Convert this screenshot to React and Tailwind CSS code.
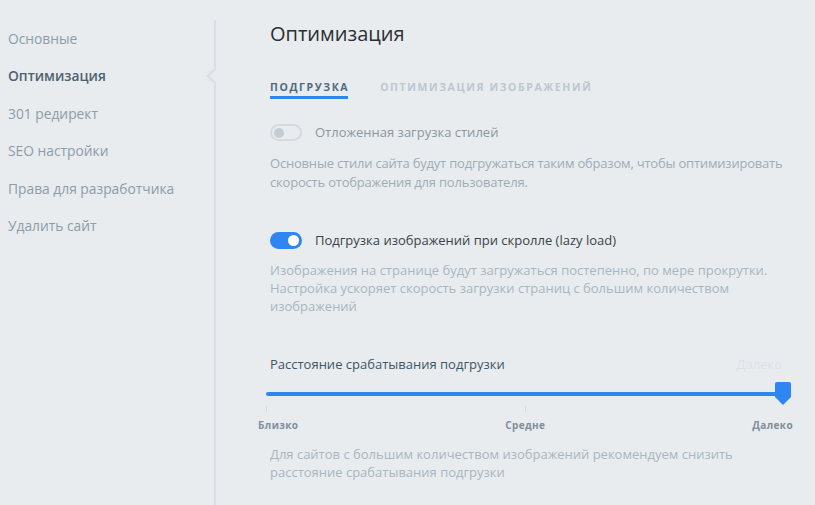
import React from "react";

const font = { fontFamily: '"Open Sans", "Noto Sans", sans-serif' };

function Sidebar() {
  const items = ["Основные", "Оптимизация", "301 редирект", "SEO настройки", "Права для разработчика", "Удалить сайт"];
  return (
    <div className="relative w-[216px] shrink-0 pt-[20px]">
      <div className="absolute right-0 top-[20px] bottom-0 w-[2px] bg-[#d9dfe4]" />
      <div className="absolute right-[-5px] top-[70px] h-[12px] w-[12px] rotate-45 border-b-2 border-l-2 border-[#d9dfe4] bg-[#e8ecef]" />
      <div className="flex flex-col pl-[8px] pt-[9px]">
        {items.map((t, i) => (
          <div
            key={t}
            className={`h-[37.4px] text-[13.8px] leading-[20px] ${i === 1 ? "text-[#4f6170] font-semibold" : "text-[#8d9ca8]"}`}
          >
            {t}
          </div>
        ))}
      </div>
    </div>
  );
}

function Toggle({ on }) {
  if (on)
    return (
      <div className="flex h-[17px] w-[32px] items-center justify-end rounded-full bg-[#2f86f2] pr-[3px]">
        <div className="h-[11px] w-[11px] rounded-full bg-white" />
      </div>
    );
  return (
    <div className="flex h-[17px] w-[32px] items-center rounded-full border-2 border-[#d3dae0] pl-[2px]">
      <div className="h-[10px] w-[10px] rounded-full bg-[#c4cdd4]" />
    </div>
  );
}

export default function App() {
  return (
    <div className="flex h-[505px] w-[815px] overflow-hidden bg-[#e8ecef]" style={font}>
      <Sidebar />
      <div className="flex-1 pl-[54px] pr-[20px] pt-[20px]">
        <h1 className="text-[20px] leading-[28px] font-normal text-[#2a2f33]">Оптимизация</h1>
        <div className="mt-[32px] flex gap-[31px] text-[10.5px] font-bold tracking-[1.6px] leading-[14px]">
          <div className="flex flex-col text-[#4f6a80]">
            <span>ПОДГРУЗКА</span>
            <span className="mt-[2px] h-[3px] w-[78px] bg-[#2f86f2]" />
          </div>
          <span className="text-[#bcc7cf]">ОПТИМИЗАЦИЯ ИЗОБРАЖЕНИЙ</span>
        </div>

        <div className="mt-[24px] flex items-center gap-[13px]">
          <Toggle on={false} />
          <span className="text-[13px] text-[#8b98a1]">Отложенная загрузка стилей</span>
        </div>
        <p className="mt-[11px] mr-[-6px] text-[13px] leading-[19px] tracking-[-0.2px] text-[#9eacb6]">
          Основные стили сайта будут подгружаться таким образом, чтобы оптимизировать скорость отображения для пользователя.
        </p>

        <div className="mt-[39px] flex items-center gap-[13px]">
          <Toggle on />
          <span className="text-[13px] text-[#3b4249]">Подгрузка изображений при скролле (lazy load)</span>
        </div>
        <p className="mt-[11px] pr-[10px] text-[13px] leading-[18px] text-[#a9b6bf]">
          Изображения на странице будут загружаться постепенно, по мере прокрутки. Настройка ускоряет скорость загрузки страниц с большим количеством изображений
        </p>

        <div className="mt-[40px] mr-[13px] flex items-center justify-between">
          <span className="text-[13px] text-[#3f5666]">Расстояние срабатывания подгрузки</span>
          <span className="text-[13px] text-[#dde2e6]">Далеко</span>
        </div>

        <div className="relative mt-[17px] ml-[-4px] h-[4px]">
          <div className="h-[4px] w-[516px] rounded-full bg-[#2f86f2]" />
          <svg className="absolute left-[509px] top-[-10px]" width="16" height="23" viewBox="0 0 16 23">
            <path d="M2 0 H14 A2 2 0 0 1 16 2 V15 L8 23 L0 15 V2 A2 2 0 0 1 2 0 Z" fill="#2f86f2" />
          </svg>
        </div>
        <div className="ml-[-4px] mt-[10px] flex w-[518px] justify-between">
          <span className="h-[6px] w-[1px] bg-[#d5dce1]" />
          <span className="h-[6px] w-[1px] bg-[#d5dce1]" />
          <span className="h-[6px] w-[1px] bg-transparent" />
        </div>
        <div className="ml-[-12px] mt-[6px] flex w-[535px] justify-between text-[10px] font-bold tracking-[0.4px] text-[#7f8f9b]">
          <span>Близко</span>
          <span>Средне</span>
          <span>Далеко</span>
        </div>

        <p className="mt-[12px] text-[13px] leading-[18px] text-[#a9b6bf]">
          Для сайтов с большим количеством изображений рекомендуем снизить расстояние срабатывания подгрузки
        </p>
      </div>
    </div>
  );
}
